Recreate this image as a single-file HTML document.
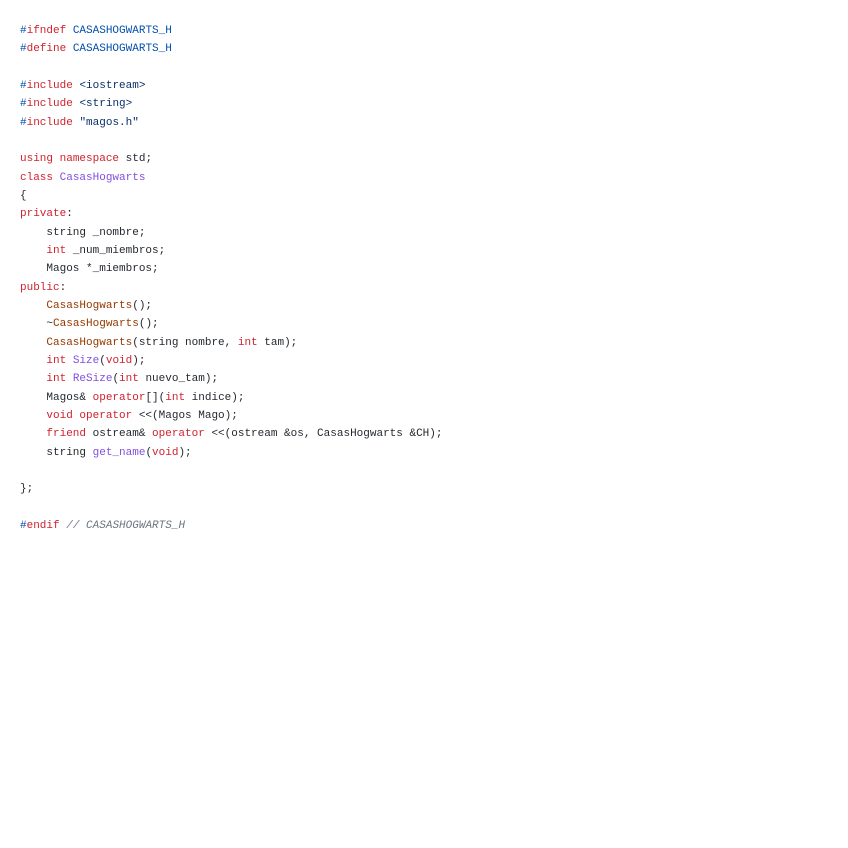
<html><head><style>
body{margin:0;background:#fff;}
pre{margin:0;position:absolute;left:20px;top:22px;font-family:"Liberation Mono",monospace;font-size:11px;line-height:18.33px;color:#24292f;}
.k{color:#cf222e}.c{color:#0550ae}.s{color:#0a3069}.f{color:#8250df}.t{color:#953800}.m{color:#6e7781;font-style:italic}
</style></head><body><pre><span class="c">#</span><span class="k">ifndef</span> <span class="c">CASASHOGWARTS_H</span>
<span class="c">#</span><span class="k">define</span> <span class="c">CASASHOGWARTS_H</span>

<span class="c">#</span><span class="k">include</span> <span class="s">&lt;iostream&gt;</span>
<span class="c">#</span><span class="k">include</span> <span class="s">&lt;string&gt;</span>
<span class="c">#</span><span class="k">include</span> <span class="s">"magos.h"</span>

<span class="k">using</span> <span class="k">namespace</span> std;
<span class="k">class</span> <span class="f">CasasHogwarts</span>
{
<span class="k">private</span>:
    string _nombre;
    <span class="k">int</span> _num_miembros;
    Magos *_miembros;
<span class="k">public</span>:
    <span class="t">CasasHogwarts</span>();
    ~<span class="t">CasasHogwarts</span>();
    <span class="t">CasasHogwarts</span>(string nombre, <span class="k">int</span> tam);
    <span class="k">int</span> <span class="f">Size</span>(<span class="k">void</span>);
    <span class="k">int</span> <span class="f">ReSize</span>(<span class="k">int</span> nuevo_tam);
    Magos&amp; <span class="k">operator</span>[](<span class="k">int</span> indice);
    <span class="k">void</span> <span class="k">operator</span> &lt;&lt;(Magos Mago);
    <span class="k">friend</span> ostream&amp; <span class="k">operator</span> &lt;&lt;(ostream &amp;os, CasasHogwarts &amp;CH);
    string <span class="f">get_name</span>(<span class="k">void</span>);

};

<span class="c">#</span><span class="k">endif</span> <span class="m">// CASASHOGWARTS_H</span></pre></body></html>
